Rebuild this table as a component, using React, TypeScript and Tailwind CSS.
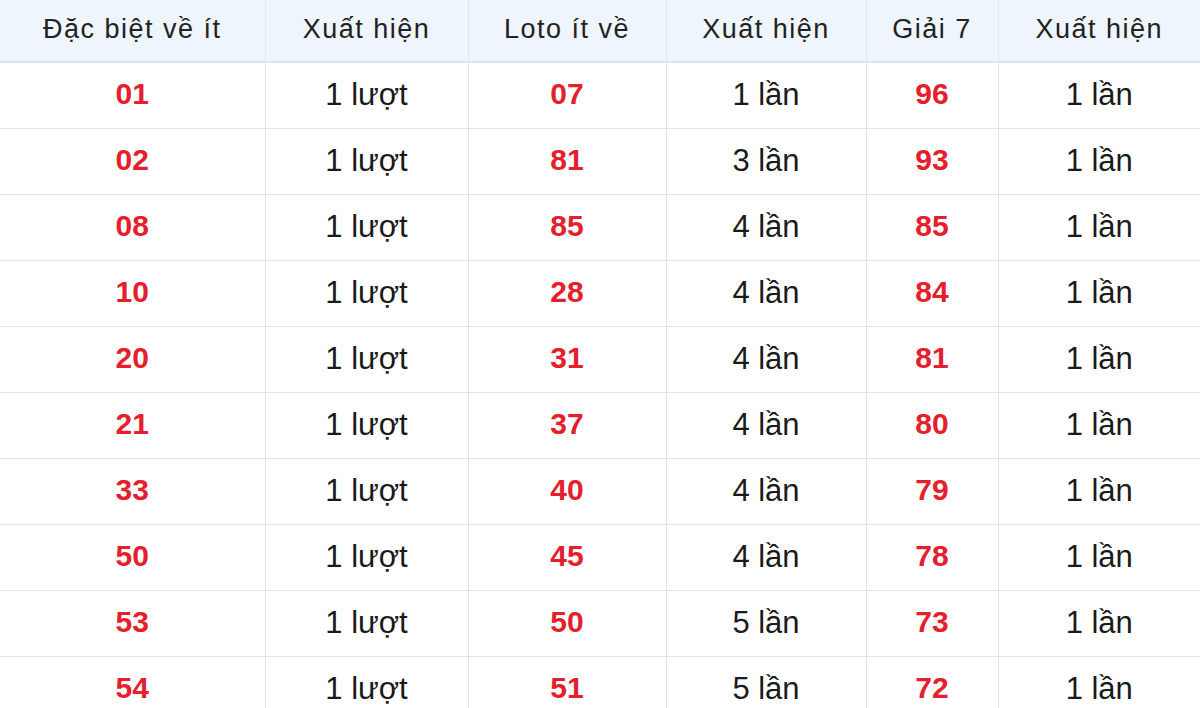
const rows: [string, string, string, string, string, string][] = [
  ['01', '1 lượt', '07', '1 lần', '96', '1 lần'],
  ['02', '1 lượt', '81', '3 lần', '93', '1 lần'],
  ['08', '1 lượt', '85', '4 lần', '85', '1 lần'],
  ['10', '1 lượt', '28', '4 lần', '84', '1 lần'],
  ['20', '1 lượt', '31', '4 lần', '81', '1 lần'],
  ['21', '1 lượt', '37', '4 lần', '80', '1 lần'],
  ['33', '1 lượt', '40', '4 lần', '79', '1 lần'],
  ['50', '1 lượt', '45', '4 lần', '78', '1 lần'],
  ['53', '1 lượt', '50', '5 lần', '73', '1 lần'],
  ['54', '1 lượt', '51', '5 lần', '72', '1 lần'],
];

const headers = ['Đặc biệt về ít', 'Xuất hiện', 'Loto ít về', 'Xuất hiện', 'Giải 7', 'Xuất hiện'];
const widths = ['w-[265px]', 'w-[203px]', 'w-[198px]', 'w-[200px]', 'w-[132px]', 'w-[202px]'];

export default function App() {
  return (
    <div className="w-[1200px] h-[708px] overflow-hidden bg-white font-['Liberation_Sans',Arial,sans-serif]">
      <table className="w-[1200px] table-fixed border-collapse">
        <colgroup>
          {widths.map((w, i) => (
            <col key={i} className={w} />
          ))}
        </colgroup>
        <thead>
          <tr className="h-[62px] bg-[#eef5fd] border-b-2 border-[#dfe4ea]">
            {headers.map((h, i) => (
              <th
                key={i}
                className="pb-[3px] font-normal text-[27px] tracking-[1.5px] text-[#222] text-center border-l border-[#e2e6ea] first:border-l-0"
              >
                {h}
              </th>
            ))}
          </tr>
        </thead>
        <tbody>
          {rows.map((r, ri) => (
            <tr key={ri} className="h-[66px] border-b border-[#e2e2e2]">
              {r.map((c, ci) => (
                <td
                  key={ci}
                  className={`text-center border-l border-[#e2e2e2] first:border-l-0 ${
                    ci % 2 === 0
                      ? 'pb-[3px] text-[30px] font-bold text-[#e4202c]'
                      : 'text-[31px] text-[#1a1a1a]'
                  }`}
                >
                  {c}
                </td>
              ))}
            </tr>
          ))}
        </tbody>
      </table>
    </div>
  );
}
